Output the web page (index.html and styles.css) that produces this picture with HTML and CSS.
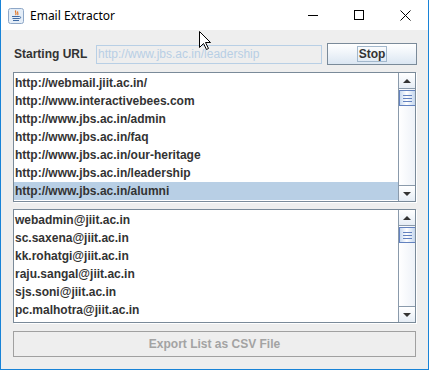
FILE: index.html
```html
<!DOCTYPE html>
<html lang="en">
<head>
  <meta charset="UTF-8" />
  <title>Email Extractor</title>
  <link rel="stylesheet" href="styles.css">
</head>
<body>
  <div class="window">
    <div class="titlebar">
      <svg class="app-icon" width="16" height="16" viewBox="0 0 16 16">
        <rect x="0.5" y="0.5" width="15" height="15" rx="2" fill="#e4edf7" stroke="#8ea7c7" />
        <path d="M8 2.5c-2 1.5 1.5 2.5 -0.5 4.5 M10 3.5c-1.5 1 1 2 -0.5 3.5" fill="none" stroke="#e0782a" stroke-width="1.2" />
        <path d="M4 8.5h7.5 M4.5 10.5h7 M5 12.5h6" stroke="#3f6aa3" stroke-width="1" />
        <path d="M11.5 8.5c1.5 0 1.5 2 0 2" fill="none" stroke="#3f6aa3" stroke-width="1" />
      </svg>
      <span class="title">Email Extractor</span>
      <div class="controls">
        <span class="ctl"><svg width="10" height="10" viewBox="0 0 10 10"><path d="M0 5.5h10" stroke="#000" /></svg></span>
        <span class="ctl"><svg width="10" height="10" viewBox="0 0 10 10"><rect x="0.5" y="0.5" width="9" height="9" fill="none" stroke="#000" /></svg></span>
        <span class="ctl"><svg width="11" height="11" viewBox="0 0 11 11"><path d="M0.5 0.5l10 10M10.5 0.5l-10 10" stroke="#000" /></svg></span>
      </div>
    </div>

    <div class="content">
      <div class="url-row">
        <label class="url-label">Starting URL</label>
        <input class="url-field" type="text" value="http://www.jbs.ac.in/leadership" disabled />
        <button class="btn btn-stop" type="button"><span class="focus">Stop</span></button>
      </div>

      <div class="list list-urls">
        <ul class="items">
          <li>http://webmail.jiit.ac.in/</li>
          <li>http://www.interactivebees.com</li>
          <li>http://www.jbs.ac.in/admin</li>
          <li>http://www.jbs.ac.in/faq</li>
          <li>http://www.jbs.ac.in/our-heritage</li>
          <li>http://www.jbs.ac.in/leadership</li>
          <li class="selected">http://www.jbs.ac.in/alumni</li>
        </ul>
        <div class="scrollbar">
          <span class="sb-btn sb-up"><i></i></span>
          <span class="sb-thumb"><i></i><i></i><i></i></span>
          <span class="sb-track"></span>
          <span class="sb-btn sb-down"><i></i></span>
        </div>
      </div>

      <div class="list list-emails">
        <ul class="items">
          <li>webadmin@jiit.ac.in</li>
          <li>sc.saxena@jiit.ac.in</li>
          <li>kk.rohatgi@jiit.ac.in</li>
          <li>raju.sangal@jiit.ac.in</li>
          <li>sjs.soni@jiit.ac.in</li>
          <li>pc.malhotra@jiit.ac.in</li>
        </ul>
        <div class="scrollbar">
          <span class="sb-btn sb-up"><i></i></span>
          <span class="sb-thumb"><i></i><i></i><i></i></span>
          <span class="sb-track"></span>
          <span class="sb-btn sb-down"><i></i></span>
        </div>
      </div>

      <button class="btn btn-export" type="button" disabled>Export List as CSV File</button>
    </div>

    <svg class="cursor" width="13" height="20" viewBox="0 0 13 20">
      <path d="M0.5 0.5V16.5L4.5 12.5L7.5 18.5L9.5 17.5L6.5 11.5H11.5Z" fill="#fff" stroke="#000" stroke-linejoin="round" />
    </svg>
  </div>
</body>
</html>
```

FILE: styles.css
```css
body {
  margin: 0;
  background: #fff;
  font-family: 'Liberation Sans', Arial, sans-serif;
}
.window {
  position: relative;
  width: 427px;
  height: 369px;
  border: 1px solid #1883d7;
  border-top: none;
  background: #eeeeee;
  display: flex;
  flex-direction: column;
}
.titlebar {
  height: 30px;
  background: #fff;
  display: flex;
  align-items: center;
  padding-left: 7px;
}
.app-icon {
  margin-top: 1px;
}
.title {
  font-family: 'Noto Sans', sans-serif;
  font-size: 12px;
  color: #000;
  margin-left: 6px;
}
.controls {
  margin-left: auto;
  display: flex;
  height: 30px;
}
.ctl {
  width: 46px;
  display: flex;
  align-items: center;
  justify-content: center;
}
.content {
  padding: 13px 12px 12px 12px;
  display: flex;
  flex-direction: column;
}
.url-row {
  display: flex;
  align-items: center;
  height: 22px;
  margin-right: -1px;
}
.url-label {
  width: 83px;
  font-size: 12px;
  font-weight: 700;
  color: #333;
  padding-left: 1px;
  box-sizing: border-box;
}
.url-field {
  width: 226px;
  height: 19px;
  box-sizing: border-box;
  border: 1px solid #b8cfe5;
  background: #eeeeee;
  color: #b8cfe5;
  font-family: 'Liberation Sans', Arial, sans-serif;
  font-size: 12px;
  padding: 0 1px;
  margin: 0 5px 0 0;
  -webkit-text-fill-color: #b8cfe5;
  opacity: 1;
}
.btn {
  font-family: 'Liberation Sans', Arial, sans-serif;
  font-size: 12px;
  font-weight: 700;
  box-sizing: border-box;
  padding: 0;
  margin: 0;
}
.btn-stop {
  width: 90px;
  height: 22px;
  border: 1px solid #7a8a99;
  background: linear-gradient(#ffffff 0%, #f3f7fb 35%, #dbe6f2 100%);
  color: #333;
  display: flex;
  align-items: center;
  justify-content: center;
}
.focus {
  border: 1px solid #a3b8cc;
  padding: 0 1px;
  line-height: 14px;
}
.list {
  display: flex;
  border: 1px solid #7a8a99;
  background: #fff;
  box-shadow: 1px 1px 0 #fff;
}
.list-urls {
  margin-top: 7px;
  height: 130px;
  box-sizing: border-box;
}
.list-emails {
  margin-top: 7px;
  height: 114px;
  box-sizing: border-box;
}
.items {
  flex: 1;
  list-style: none;
  margin: 0;
  padding: 1px 0 0 0;
}
.items li {
  height: 18px;
  line-height: 18px;
  font-size: 12px;
  font-weight: 700;
  color: #333;
  padding-left: 1px;
  white-space: nowrap;
}
.items li.selected {
  background: #b8cfe5;
}
.scrollbar {
  width: 16px;
  display: flex;
  flex-direction: column;
  border-left: 1px solid #8a9aab;
  background: linear-gradient(to right, #ffffff, #eef2f8);
}
.sb-btn {
  height: 15px;
  flex: none;
  background: linear-gradient(#ffffff, #e6edf5);
  display: flex;
  align-items: center;
  justify-content: center;
}
.sb-up {
  border-bottom: 1px solid #8a9aab;
}
.sb-down {
  border-top: 1px solid #8a9aab;
}
.sb-btn i {
  width: 0;
  height: 0;
  border-left: 4px solid transparent;
  border-right: 4px solid transparent;
}
.sb-up i {
  border-bottom: 4px solid #333;
}
.sb-down i {
  border-top: 4px solid #333;
}
.sb-thumb {
  height: 14px;
  flex: none;
  margin-top: 1px;
  border: 1px solid #6382bf;
  border-right: none;
  background: linear-gradient(to right, #c9daf0, #ffffff 45%, #c4d6ee);
  display: flex;
  flex-direction: column;
  justify-content: center;
  align-items: center;
  gap: 2px;
}
.sb-thumb i {
  width: 9px;
  height: 1px;
  background: #6382bf;
}
.sb-track {
  flex: 1;
}
.btn-export {
  margin-top: 8px;
  height: 26px;
  width: 100%;
  border: 1px solid #a0a0a0;
  background: #eeeeee;
  color: #a3a3a3;
  margin-right: -1px;
}
.cursor {
  position: absolute;
  left: 198px;
  top: 31px;
}
```
